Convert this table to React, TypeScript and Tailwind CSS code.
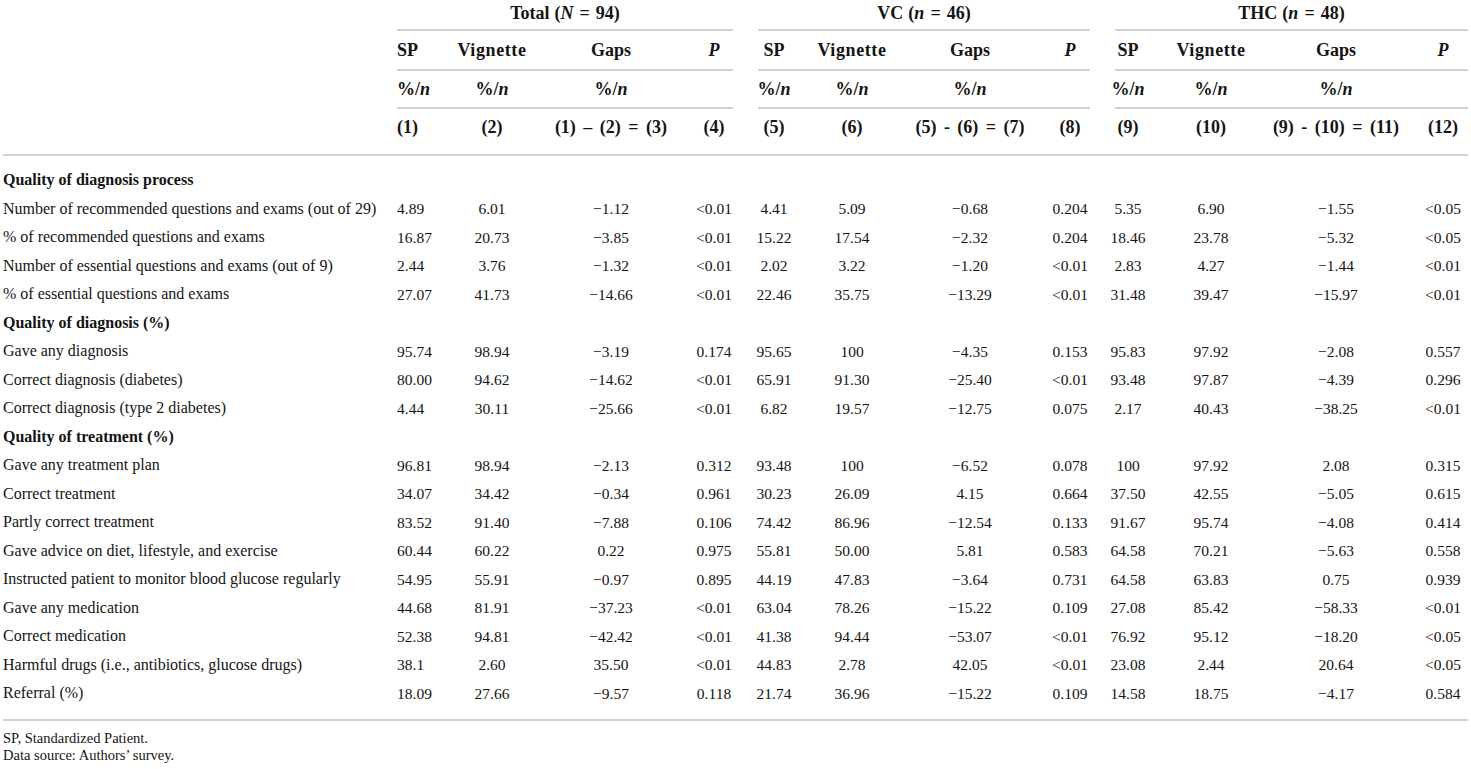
import React from 'react';

const GRID =
  'grid grid-cols-[397px_58px_74px_164px_42px_78px_78px_158px_42px_74px_92px_158px_56px]';

type Row = string[] | { heading: string };

const rows: Row[] = [
  { heading: 'Quality of diagnosis process' },
  ['Number of recommended questions and exams (out of 29)', '4.89', '6.01', '−1.12', '<0.01', '4.41', '5.09', '−0.68', '0.204', '5.35', '6.90', '−1.55', '<0.05'],
  ['% of recommended questions and exams', '16.87', '20.73', '−3.85', '<0.01', '15.22', '17.54', '−2.32', '0.204', '18.46', '23.78', '−5.32', '<0.05'],
  ['Number of essential questions and exams (out of 9)', '2.44', '3.76', '−1.32', '<0.01', '2.02', '3.22', '−1.20', '<0.01', '2.83', '4.27', '−1.44', '<0.01'],
  ['% of essential questions and exams', '27.07', '41.73', '−14.66', '<0.01', '22.46', '35.75', '−13.29', '<0.01', '31.48', '39.47', '−15.97', '<0.01'],
  { heading: 'Quality of diagnosis (%)' },
  ['Gave any diagnosis', '95.74', '98.94', '−3.19', '0.174', '95.65', '100', '−4.35', '0.153', '95.83', '97.92', '−2.08', '0.557'],
  ['Correct diagnosis (diabetes)', '80.00', '94.62', '−14.62', '<0.01', '65.91', '91.30', '−25.40', '<0.01', '93.48', '97.87', '−4.39', '0.296'],
  ['Correct diagnosis (type 2 diabetes)', '4.44', '30.11', '−25.66', '<0.01', '6.82', '19.57', '−12.75', '0.075', '2.17', '40.43', '−38.25', '<0.01'],
  { heading: 'Quality of treatment (%)' },
  ['Gave any treatment plan', '96.81', '98.94', '−2.13', '0.312', '93.48', '100', '−6.52', '0.078', '100', '97.92', '2.08', '0.315'],
  ['Correct treatment', '34.07', '34.42', '−0.34', '0.961', '30.23', '26.09', '4.15', '0.664', '37.50', '42.55', '−5.05', '0.615'],
  ['Partly correct treatment', '83.52', '91.40', '−7.88', '0.106', '74.42', '86.96', '−12.54', '0.133', '91.67', '95.74', '−4.08', '0.414'],
  ['Gave advice on diet, lifestyle, and exercise', '60.44', '60.22', '0.22', '0.975', '55.81', '50.00', '5.81', '0.583', '64.58', '70.21', '−5.63', '0.558'],
  ['Instructed patient to monitor blood glucose regularly', '54.95', '55.91', '−0.97', '0.895', '44.19', '47.83', '−3.64', '0.731', '64.58', '63.83', '0.75', '0.939'],
  ['Gave any medication', '44.68', '81.91', '−37.23', '<0.01', '63.04', '78.26', '−15.22', '0.109', '27.08', '85.42', '−58.33', '<0.01'],
  ['Correct medication', '52.38', '94.81', '−42.42', '<0.01', '41.38', '94.44', '−53.07', '<0.01', '76.92', '95.12', '−18.20', '<0.05'],
  ['Harmful drugs (i.e., antibiotics, glucose drugs)', '38.1', '2.60', '35.50', '<0.01', '44.83', '2.78', '42.05', '<0.01', '23.08', '2.44', '20.64', '<0.05'],
  ['Referral (%)', '18.09', '27.66', '−9.57', '0.118', '21.74', '36.96', '−15.22', '0.109', '14.58', '18.75', '−4.17', '0.584'],
];

const groups = [
  { name: 'Total', sym: 'N', n: '94', formula: '(1) – (2) = (3)', nums: ['(1)', '(2)', '(4)'] },
  { name: 'VC', sym: 'n', n: '46', formula: '(5) - (6) = (7)', nums: ['(5)', '(6)', '(8)'] },
  { name: 'THC', sym: 'n', n: '48', formula: '(9) - (10) = (11)', nums: ['(9)', '(10)', '(12)'] },
];

// line spans per group: Total 397-733, VC 758-1090, THC 1115-1468
const spanCls = ['col-span-4 mr-[2px]', 'col-span-4 ml-[23px] mr-[1px]', 'col-span-4 ml-[24px] mr-[3px]'];

function GroupLines() {
  return (
    <div className={GRID + ' h-[2px]'}>
      <div />
      {spanCls.map((c) => (
        <div key={c} className={c + ' bg-[#d2d2d2]'} />
      ))}
    </div>
  );
}

function Cell({ children, first }: { children: React.ReactNode; first?: boolean }) {
  return (
    <div className={`flex items-center whitespace-nowrap ${first ? 'justify-start' : 'justify-center'}`}>
      {children}
    </div>
  );
}

function PerN() {
  return (
    <span>
      %/<i>n</i>
    </span>
  );
}

export default function App() {
  return (
    <div className="w-[1471px] bg-white text-[#141414] font-['Liberation_Serif',serif]">
      {/* group headers */}
      <div className={GRID + ' h-[29px] pb-[4px] text-[18px] font-bold'}>
        <div />
        {groups.map((g, i) => (
          <div key={g.name} className={spanCls[i] + ' flex items-center justify-center whitespace-nowrap'}>
            <span className="mr-[5px]">{g.name}</span>(<i>{g.sym}</i>
            <span className="mx-[6px]">=</span>
            {g.n})
          </div>
        ))}
      </div>
      <GroupLines />

      <div className={GRID + ' h-[38px] text-[18px] font-bold'}>
        <div />
        {groups.map((g, i) => (
          <React.Fragment key={g.name}>
            <Cell first={i === 0}>SP</Cell>
            <Cell>
              <span className="tracking-[0.6px]">Vignette</span>
            </Cell>
            <Cell>Gaps</Cell>
            <Cell>
              <i>P</i>
            </Cell>
          </React.Fragment>
        ))}
      </div>
      <GroupLines />

      <div className={GRID + ' h-[36px] text-[18px] font-bold'}>
        <div />
        {groups.map((g, i) => (
          <React.Fragment key={g.name}>
            <Cell first={i === 0}>
              <PerN />
            </Cell>
            <Cell>
              <PerN />
            </Cell>
            <Cell>
              <PerN />
            </Cell>
            <Cell>{''}</Cell>
          </React.Fragment>
        ))}
      </div>
      <GroupLines />

      <div className={GRID + ' h-[45px] pb-[8px] text-[18px] font-bold'}>
        <div />
        {groups.map((g, i) => (
          <React.Fragment key={g.name}>
            <Cell first={i === 0}>{g.nums[0]}</Cell>
            <Cell>{g.nums[1]}</Cell>
            <Cell>
              <span className="[word-spacing:3px]">{g.formula}</span>
            </Cell>
            <Cell>{g.nums[2]}</Cell>
          </React.Fragment>
        ))}
      </div>
      <div className="mx-[3px] h-[2px] bg-[#d2d2d2]" />

      {/* body */}
      <div className="pt-[10px] pb-[11px]">
        {rows.map((r, idx) =>
          Array.isArray(r) ? (
            <div key={idx} className={GRID + ' h-[28.5px]'}>
              <div className="flex items-center whitespace-nowrap pl-[3px] text-[16px]">{r[0]}</div>
              {r.slice(1).map((v, j) => (
                <Cell key={j} first={j === 0}>
                  <span className="text-[15.5px]">{v}</span>
                </Cell>
              ))}
            </div>
          ) : (
            <div key={idx} className="flex h-[28.5px] items-center pl-[3px] text-[16px] font-bold">
              {r.heading}
            </div>
          )
        )}
      </div>
      <div className="mx-[3px] h-[2px] bg-[#d2d2d2]" />

      <div className="pt-[9px] pl-[3px] text-[14.5px] leading-[17px]">
        <p>SP, Standardized Patient.</p>
        <p>Data source: Authors’ survey.</p>
      </div>
    </div>
  );
}
